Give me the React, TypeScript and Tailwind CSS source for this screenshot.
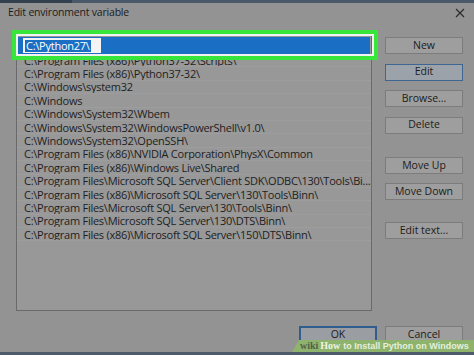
import React from "react";

const rows = [
  "C:\\Program Files (x86)\\Python37-32\\Scripts\\",
  "C:\\Program Files (x86)\\Python37-32\\",
  "C:\\Windows\\system32",
  "C:\\Windows",
  "C:\\Windows\\System32\\Wbem",
  "C:\\Windows\\System32\\WindowsPowerShell\\v1.0\\",
  "C:\\Windows\\System32\\OpenSSH\\",
  "C:\\Program Files (x86)\\NVIDIA Corporation\\PhysX\\Common",
  "C:\\Program Files (x86)\\Windows Live\\Shared",
  "C:\\Program Files\\Microsoft SQL Server\\Client SDK\\ODBC\\130\\Tools\\Bi...",
  "C:\\Program Files (x86)\\Microsoft SQL Server\\130\\Tools\\Binn\\",
  "C:\\Program Files\\Microsoft SQL Server\\130\\Tools\\Binn\\",
  "C:\\Program Files\\Microsoft SQL Server\\130\\DTS\\Binn\\",
  "C:\\Program Files (x86)\\Microsoft SQL Server\\150\\DTS\\Binn\\",
];

function Btn({ label, focused, className = "" }: { label: string; focused?: boolean; className?: string }) {
  return (
    <div
      className={
        "h-[17px] w-[78px] flex items-center justify-center text-[10.5px] text-[#1c1c1c] border " +
        (focused ? "border-[#3f6690] bg-[#9ba2a9] " : "border-[#7c7c7c] bg-[#9e9e9e] ") +
        className
      }
    >
      {label}
    </div>
  );
}

export default function App() {
  return (
    <div
      className="relative w-[474px] h-[355px] overflow-hidden bg-[#939393] flex flex-col"
      style={{ fontFamily: '"Open Sans", "Noto Sans", Arial, sans-serif' }}
    >
      <div className="h-[3px] w-full flex shrink-0">
        <div className="w-[72px] bg-[#33414f]" />
        <div className="flex-1 bg-[#4a5969]" />
      </div>
      <div className="h-[20px] flex items-center justify-between pl-[8px] pr-[8px] shrink-0">
        <span className="text-[10.5px] tracking-[-0.2px] text-[#1c1c1c]">Edit environment variable</span>
        <svg width="10" height="10" viewBox="0 0 10 10" className="mr-[1px]">
          <path d="M1 1 L9 9 M9 1 L1 9" stroke="#2a2a2a" strokeWidth="1.1" />
        </svg>
      </div>
      <div className="flex mt-[12px]">
        <div className="relative ml-[16px] w-[356px] h-[276px] border border-[#6a6a6a] bg-[#989898] text-[11px] tracking-[-0.25px] text-[#1e1e1e] leading-none">
          <div className="h-[17px] mx-[1px] mt-[1px] bg-[#1a6fc4] flex items-center pl-[5px]">
            <div className="h-[15px] w-[78px] bg-[#f4f4f4] flex items-center pl-[2px]">
              <span className="bg-[#1a6fc4] text-white h-[12px] flex items-center px-[1px]">C:\Python27\</span>
            </div>
          </div>
          {rows.map((r, i) => (
            <div
              key={i}
              className="h-[13.4px] flex items-center pl-[7px] whitespace-nowrap overflow-hidden border-b border-[#9d9d9d]"
            >
              {r}
            </div>
          ))}
          <div className="absolute left-[-5px] top-[-6px] w-[366px] h-[30px] border-[4px] border-[#38e63b]">
            <div className="w-full h-full border-[2px] border-[#f2f2f2]" />
          </div>
        </div>
        <div className="ml-[13px] flex flex-col">
          <Btn label="New" className="mt-[2px]" />
          <Btn label="Edit" focused className="mt-[9.5px]" />
          <Btn label="Browse..." className="mt-[9.5px]" />
          <Btn label="Delete" className="mt-[9.5px]" />
          <Btn label="Move Up" className="mt-[23.5px]" />
          <Btn label="Move Down" className="mt-[9px]" />
          <Btn label="Edit text..." className="mt-[22px]" />
        </div>
      </div>
      <div className="flex justify-end gap-[8px] pr-[11px] mt-[15px]">
        <div className="h-[18px] w-[78px] flex items-center justify-center text-[10.5px] text-[#1c1c1c] border-2 border-[#2f5e8e] bg-[#9a9da1]">OK</div>
        <div className="h-[18px] w-[78px] flex items-center justify-center text-[10.5px] text-[#1c1c1c] border border-[#7c7c7c] bg-[#9e9e9e]">Cancel</div>
      </div>
      <div className="absolute left-0 right-0 bottom-0 h-[3px] bg-[#4d5b6b]" />
      <div
        className="absolute right-0 bottom-[3px] h-[12px] w-[182px] bg-[#8db36c] flex items-center pl-[8px] whitespace-nowrap leading-none"
        style={{ clipPath: "polygon(7px 0, 100% 0, 100% 100%, 0 100%)" }}
      >
        <span className="text-[10px] font-bold text-[#55604a]" style={{ fontFamily: '"Liberation Serif", serif' }}>wiki</span>
        <span className="text-[10px] font-bold text-[#eef5e6] ml-[2px]" style={{ fontFamily: '"Liberation Serif", serif' }}>How</span>
        <span className="text-[9px] font-bold text-[#e6efdc] ml-[3px]" style={{ fontFamily: '"Liberation Sans", Arial, sans-serif' }}>to Install Python on Windows</span>
      </div>
    </div>
  );
}
